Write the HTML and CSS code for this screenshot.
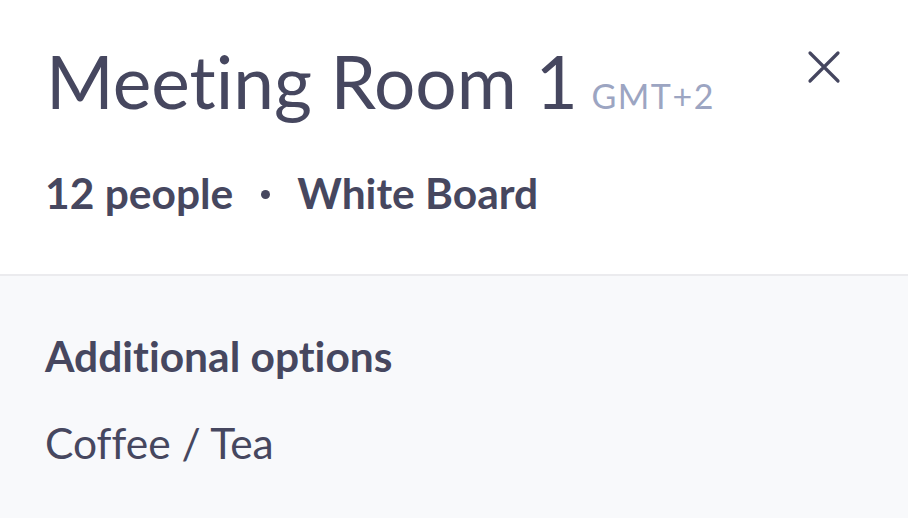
FILE: index.html
```html
<!DOCTYPE html>
<html>
<head>
<meta charset="utf-8">
<link rel="stylesheet" href="styles.css">
</head>
<body>
<div class="panel">
  <header class="head">
    <div class="title-row">
      <h1 class="title">Meeting Room 1 <span class="tz">GMT+2</span></h1>
      <button class="close" aria-label="Close">
        <svg width="34" height="34" viewBox="0 0 34 34"><path d="M3 3L31 31M31 3L3 31" stroke="#45465f" stroke-width="3.2" stroke-linecap="round"/></svg>
      </button>
    </div>
    <div class="meta">12 people<span class="dot"></span>White Board</div>
  </header>
  <section class="body">
    <h2 class="sub">Additional options</h2>
    <div class="opt">Coffee / Tea</div>
  </section>
</div>
</body>
</html>
```
FILE: styles.css
```css
html, body { margin: 0; padding: 0; }
body {
  width: 908px; height: 518px; overflow: hidden;
  font-family: Lato, "Noto Sans", sans-serif;
  font-variant-ligatures: none;
  color: #46475f;
  background: #f8f9fb;
}
.panel { display: flex; flex-direction: column; height: 100%; }
.head {
  background: #fff;
  padding: 37px 46px 0 46px;
  height: 237px;
  border-bottom: 2px solid #ebebee;
  box-sizing: content-box;
}
.title-row { display: flex; justify-content: space-between; align-items: flex-start; }
.title { margin: 0; font-weight: 400; font-size: 73px; line-height: 88px; }
.tz { font-size: 34px; letter-spacing: 1.5px; color: #9ca5c2; margin-left: -5px; }
.close { background: none; border: 0; padding: 0; margin: 13px 21px 0 0; width: 34px; height: 34px; }
.meta { margin-top: 29px; margin-left: -1px; font-size: 42.5px; font-weight: 700; line-height: 48px; display: flex; align-items: center; }
.dot { display: inline-block; width: 9px; height: 9px; border-radius: 50%; background: #46475f; margin: 2px 27px 0 28px; }
.body { padding: 55px 45px 0 45px; }
.sub { margin: 0; font-size: 42.5px; font-weight: 700; line-height: 50px; }
.opt { margin-top: 37px; font-size: 42.5px; line-height: 50px; }
```
